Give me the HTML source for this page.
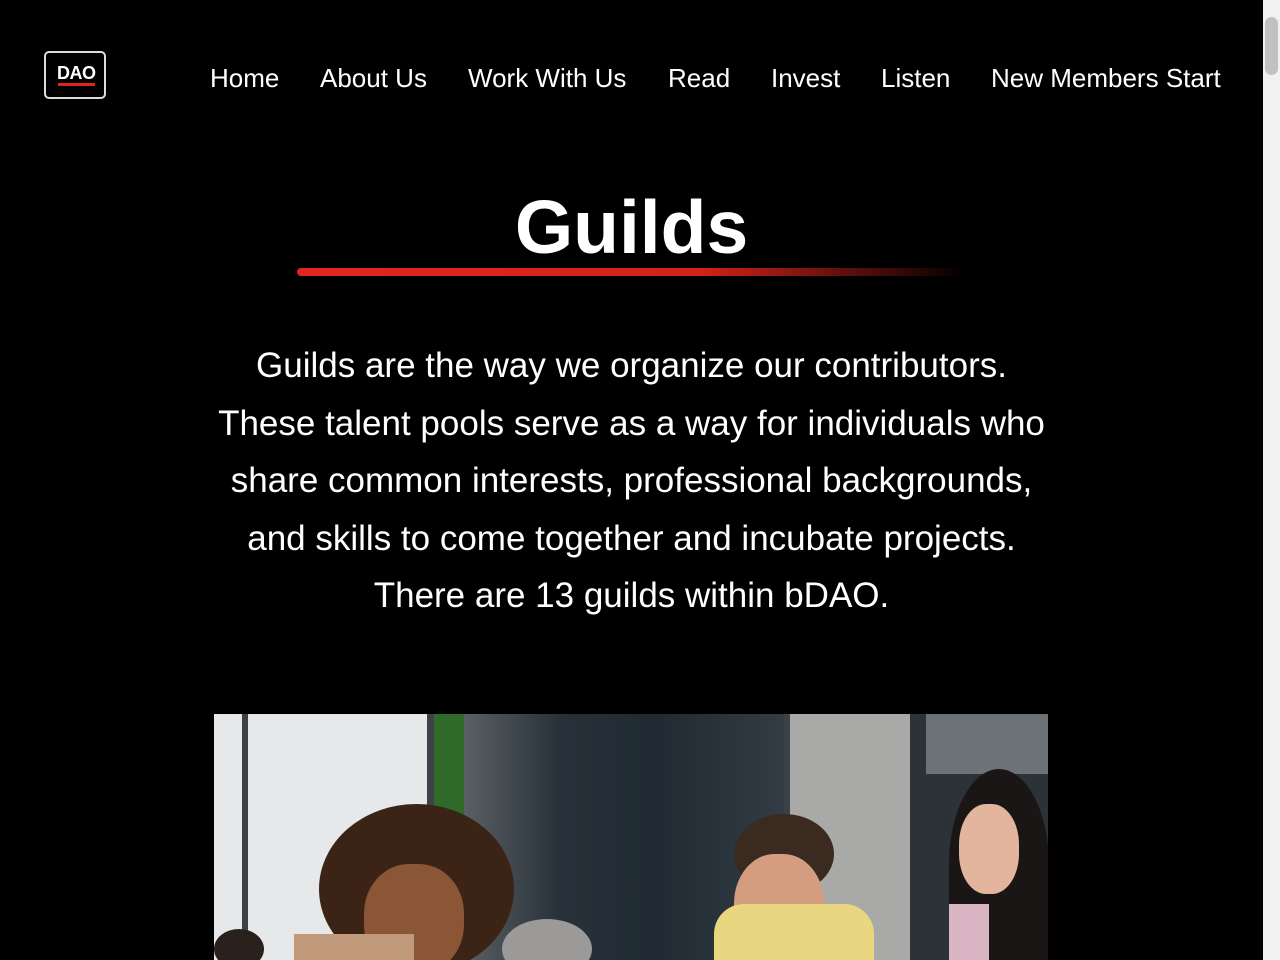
<!DOCTYPE html>
<html><head><style>
html,body{margin:0;padding:0;background:#000;overflow:hidden;}
body{width:1280px;height:960px;position:relative;font-family:"Liberation Sans",sans-serif;color:#fff;}
.sb{position:absolute;left:1263px;top:0;width:17px;height:960px;background:#f1f1f1;}
.sb .th{position:absolute;left:2px;top:17px;width:13px;height:58px;background:#c1c1c1;border-radius:7px;}
.logo{position:absolute;left:44px;top:51px;width:58px;height:44px;border:2px solid #ddd;border-radius:5px;}
.logo span{position:absolute;left:11px;top:10px;font-weight:bold;font-size:18px;letter-spacing:-0.5px;}
.logo i{position:absolute;left:12px;top:30px;width:37px;height:3px;background:#e0231b;}
nav a{position:absolute;top:63px;font-size:26px;color:#fff;text-decoration:none;}
h1{position:absolute;left:0;width:1263px;top:184px;margin:0;text-align:center;font-size:75px;font-weight:bold;}
.line{position:absolute;left:297px;top:268px;width:670px;height:8px;border-radius:4px;background:linear-gradient(90deg,#e3261b 0%,#d3221a 60%,rgba(160,20,15,0) 100%);}
p{position:absolute;left:0;width:1263px;top:337px;margin:0;text-align:center;font-size:35px;line-height:57.5px;}
.ph{position:absolute;left:214px;top:714px;width:834px;height:246px;overflow:hidden;background:#3a4248;}
.ph div{position:absolute;}
</style></head><body>
<div class="logo"><span>DAO</span><i></i></div>
<nav>
<a style="left:210px">Home</a>
<a style="left:320px">About Us</a>
<a style="left:468px">Work With Us</a>
<a style="left:668px">Read</a>
<a style="left:771px">Invest</a>
<a style="left:881px">Listen</a>
<a style="left:991px">New Members Start</a>
</nav>
<h1>Guilds</h1>
<div class="line"></div>
<p>Guilds are the way we organize our contributors.<br>These talent pools serve as a way for individuals who<br>share common interests, professional backgrounds,<br>and skills to come together and incubate projects.<br>There are 13 guilds within bDAO.</p>
<div class="ph">
<div style="left:0;top:0;width:220px;height:246px;background:#e6e8ea"></div>
<div style="left:28px;top:0;width:6px;height:246px;background:#3c4248"></div>
<div style="left:213px;top:0;width:7px;height:246px;background:#3c4248"></div>
<div style="left:220px;top:0;width:30px;height:120px;background:#2f6a2a"></div>
<div style="left:250px;top:0;width:320px;height:246px;background:linear-gradient(90deg,#5a5f63,#27313a 30%,#1f2a33 60%,#333c44)"></div>
<div style="left:576px;top:0;width:120px;height:246px;background:#a9aaa8"></div>
<div style="left:696px;top:0;width:138px;height:246px;background:#2c3338"></div>
<div style="left:712px;top:0;width:122px;height:60px;background:#6c7275"></div>
<div style="left:105px;top:90px;width:195px;height:170px;border-radius:50%;background:#3b2415"></div>
<div style="left:150px;top:150px;width:100px;height:110px;border-radius:45%;background:#8a5636"></div>
<div style="left:80px;top:220px;width:120px;height:40px;background:#c19a7b"></div>
<div style="left:520px;top:100px;width:100px;height:80px;border-radius:50%;background:#3a2a1f"></div>
<div style="left:520px;top:140px;width:90px;height:110px;border-radius:45%;background:#d49d7f"></div>
<div style="left:500px;top:190px;width:160px;height:70px;border-radius:30px 30px 0 0;background:#e9d680"></div>
<div style="left:735px;top:55px;width:100px;height:191px;border-radius:50% 50% 0 0;background:#1a1616"></div>
<div style="left:745px;top:90px;width:60px;height:90px;border-radius:45%;background:#e2b59c"></div>
<div style="left:735px;top:190px;width:40px;height:56px;background:#d9b5c4"></div>
<div style="left:288px;top:205px;width:90px;height:60px;border-radius:50%;background:#9b9a98"></div>
<div style="left:0;top:215px;width:50px;height:40px;border-radius:50%;background:#2a211c"></div>
</div>
<div class="sb"><div class="th"></div></div>
</body></html>
